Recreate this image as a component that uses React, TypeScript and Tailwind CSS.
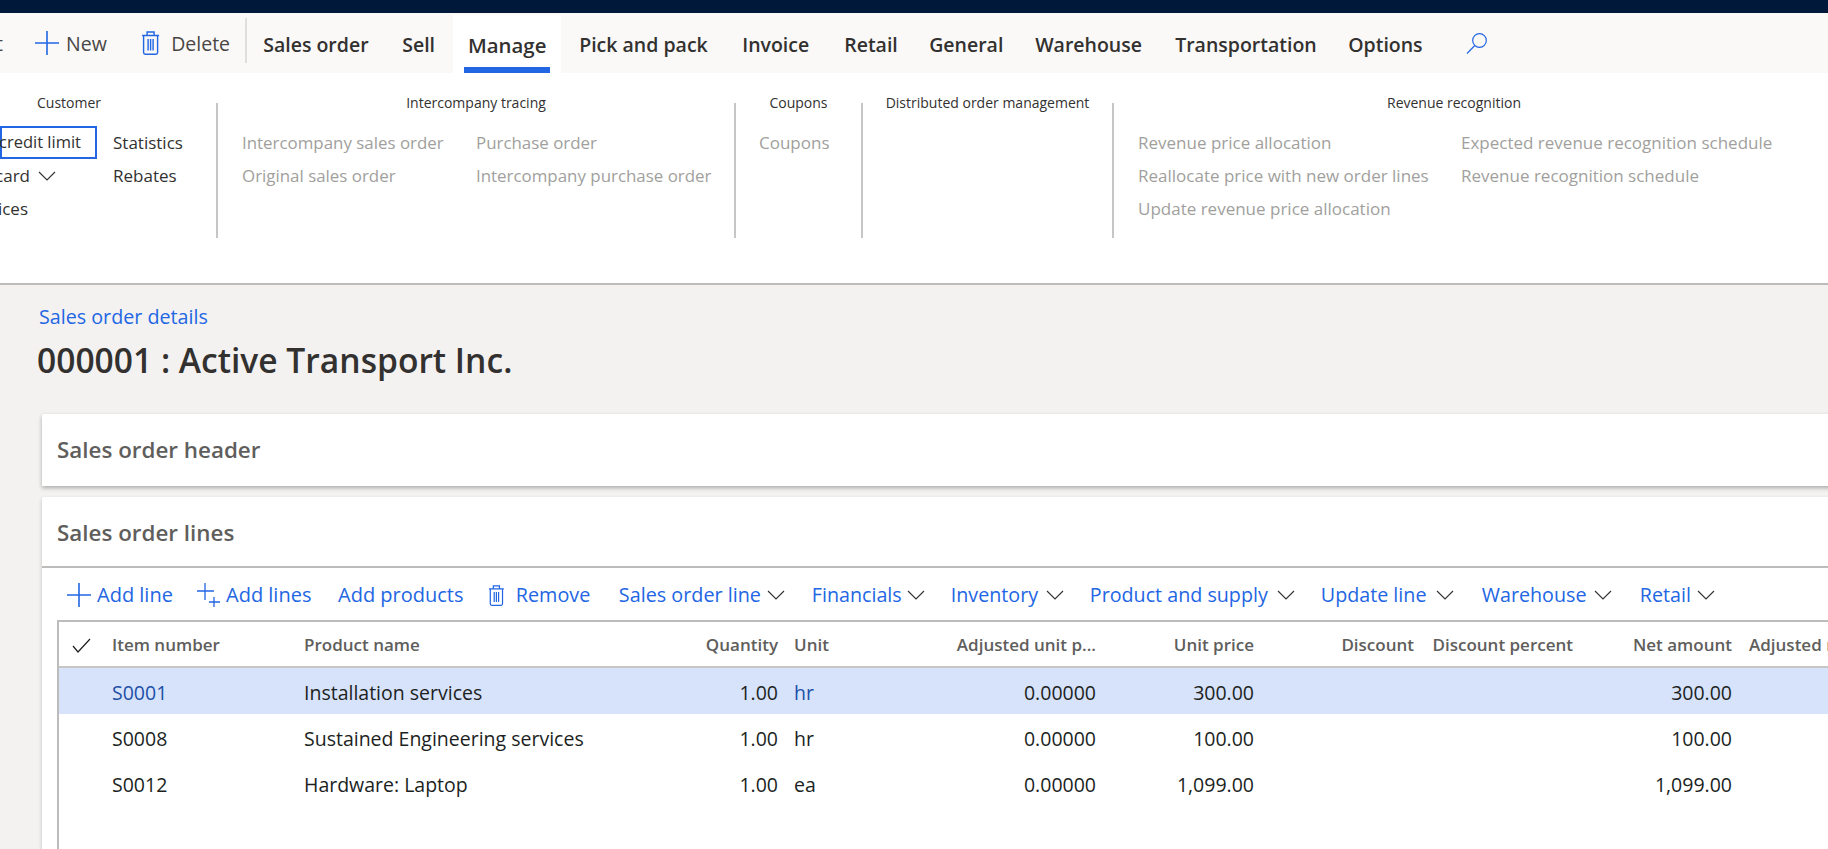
import * as React from "react";

const Plus = () => (
  <svg width="24" height="24" viewBox="0 0 24 24" className="text-[#2266e3]">
    <path d="M12 0V24M0 12H24" stroke="currentColor" strokeWidth="1.6" fill="none" />
  </svg>
);

const Trash = ({ size }: { size: number }) => (
  <svg width={size * 0.8} height={size} viewBox="0 0 19 24" className="text-[#2266e3]" fill="none">
    <path
      d="M1 4.5H18M6 4.5V1H13V4.5M2.5 4.5V21.5Q2.5 23.2 4.2 23.2H14.8Q16.5 23.2 16.5 21.5V4.5M7 8V19.5M9.5 8V19.5M12 8V19.5"
      stroke="currentColor"
      strokeWidth="1.4"
    />
  </svg>
);

const Chevron = () => (
  <svg width="18" height="10" viewBox="0 0 18 10" fill="none" className="shrink-0">
    <path d="M1 1L9 9L17 1" stroke="#323130" strokeWidth="1.1" />
  </svg>
);

const SearchIcon = () => (
  <svg width="22" height="22" viewBox="0 0 22 22" fill="none">
    <circle cx="13.5" cy="8.5" r="6.8" stroke="#2266e3" strokeWidth="1.2" />
    <path d="M8.8 13.5L1 21.5" stroke="#2266e3" strokeWidth="1.2" />
  </svg>
);

const Row = ({ cells, selected }: { cells: string[]; selected?: boolean }) => (
  <div
    className={
      "grid grid-cols-[53px_192px_345px_129px_122px_196px_158px_160px_159px_159px_200px] h-[46px] items-center pt-[4px] text-[19.5px] text-[#201f1e] " +
      (selected ? "bg-[#d6e3fa]" : "")
    }
  >
    <div />
    <div className={selected ? "text-[#1d4fa8]" : ""}>{cells[0]}</div>
    <div>{cells[1]}</div>
    <div className="text-right">{cells[2]}</div>
    <div className={"pl-[16px] " + (selected ? "text-[#1d4fa8]" : "")}>{cells[3]}</div>
    <div className="text-right">{cells[4]}</div>
    <div className="text-right">{cells[5]}</div>
    <div />
    <div />
    <div className="text-right">{cells[6]}</div>
  </div>
);

export default function App() {
  return (
    <div className="h-screen w-full overflow-hidden bg-[#f3f2f1] font-['Open_Sans',sans-serif] text-[#323130]">
      <div className="h-[13px] bg-[#00183a]" />

      {/* tab strip */}
      <div className="flex h-[60px] items-center whitespace-nowrap bg-[#faf9f8] text-[19.5px]">
        <div className="flex w-[3px] justify-end pt-[2px] text-[#484644]">Edit</div>
        <div className="ml-[32px] w-[24px]">
          <Plus />
        </div>
        <div className="ml-[7px] w-[75px] pt-[2px] text-[#484644]">New</div>
        <Trash size={24} />
        <div className="ml-[11px] w-[74px] pt-[2px] text-[#484644]">Delete</div>
        <div className="mt-[-6px] h-[45px] w-[2px] bg-[#e1dfdd]" />
        <div className="ml-[16px] w-[139px] pt-[3px] font-semibold">Sales order</div>
        <div className="w-[51px] pt-[3px] font-semibold">Sell</div>
        <div className="mt-[2px] flex h-[58px] w-[108px] flex-col items-center self-end bg-white">
          <div className="flex flex-1 items-center pt-[8px] text-[20.4px] font-semibold">Manage</div>
          <div className="h-[6px] w-[86px] bg-[#2266e3]" />
        </div>
        <div className="ml-[18px] w-[163px] pt-[3px] font-semibold">Pick and pack</div>
        <div className="w-[102px] pt-[3px] font-semibold">Invoice</div>
        <div className="w-[85px] pt-[3px] font-semibold">Retail</div>
        <div className="w-[106px] pt-[3px] font-semibold">General</div>
        <div className="w-[140px] pt-[3px] font-semibold">Warehouse</div>
        <div className="w-[173px] pt-[3px] font-semibold">Transportation</div>
        <div className="w-[118px] pt-[3px] font-semibold">Options</div>
        <SearchIcon />
      </div>

      {/* ribbon body */}
      <div className="flex h-[212px] whitespace-nowrap border-b-2 border-[#bebcba] bg-white pt-[20px] text-[17px] text-[#a19f9d]">
        <div className="w-[216px] shrink-0">
          <div className="ml-[37px] h-[20px] text-[14px] leading-[20px] text-[#323130]">Customer</div>
          <div className="mt-[13px] flex">
            <div className="w-[113px] text-[#323130]">
              <div className="flex h-[33px] w-[97px] items-center justify-end border-2 border-[#2266e3] pr-[14px] text-[16.5px]">
                Check credit limit
              </div>
              <div className="flex h-[33px] w-[56px] items-center justify-end gap-[8px]">
                Credit card
                <Chevron />
              </div>
              <div className="flex h-[33px] w-[28px] items-center justify-end">Invoices</div>
            </div>
            <div className="text-[#323130]">
              <div className="flex h-[33px] items-center">Statistics</div>
              <div className="flex h-[33px] items-center">Rebates</div>
            </div>
          </div>
        </div>
        <div className="mt-[10px] h-[135px] w-[2px] bg-[#c8c6c4]" />

        <div className="w-[516px] shrink-0">
          <div className="h-[20px] text-center text-[14px] leading-[20px] text-[#323130]">Intercompany tracing</div>
          <div className="mt-[13px] grid grid-cols-[234px_1fr] pl-[24px] text-[16.9px]">
            <div className="flex h-[33px] items-center">Intercompany sales order</div>
            <div className="flex h-[33px] items-center">Purchase order</div>
            <div className="flex h-[33px] items-center">Original sales order</div>
            <div className="flex h-[33px] items-center">Intercompany purchase order</div>
          </div>
        </div>
        <div className="mt-[10px] h-[135px] w-[2px] bg-[#c8c6c4]" />

        <div className="w-[125px] shrink-0">
          <div className="h-[20px] text-center text-[14px] leading-[20px] text-[#323130]">Coupons</div>
          <div className="mt-[13px] flex h-[33px] items-center pl-[23px]">Coupons</div>
        </div>
        <div className="mt-[10px] h-[135px] w-[2px] bg-[#c8c6c4]" />

        <div className="w-[249px] shrink-0">
          <div className="h-[20px] text-center text-[14px] leading-[20px] text-[#323130]">
            Distributed order management
          </div>
        </div>
        <div className="mt-[10px] h-[135px] w-[2px] bg-[#c8c6c4]" />

        <div className="w-[680px] shrink-0">
          <div className="h-[20px] text-center text-[14px] leading-[20px] text-[#323130]">Revenue recognition</div>
          <div className="mt-[13px] grid grid-cols-[323px_1fr] pl-[24px]">
            <div className="flex h-[33px] items-center">Revenue price allocation</div>
            <div className="flex h-[33px] items-center">Expected revenue recognition schedule</div>
            <div className="flex h-[33px] items-center">Reallocate price with new order lines</div>
            <div className="flex h-[33px] items-center">Revenue recognition schedule</div>
            <div className="flex h-[33px] items-center">Update revenue price allocation</div>
          </div>
        </div>
      </div>

      {/* page title */}
      <div className="pl-[39px] pt-[18px]">
        <div className="text-[19.7px] leading-[28px] text-[#2266e3]">Sales order details</div>
        <div className="-ml-[2px] mt-[8px] text-[33.6px] font-semibold leading-[42px]">
          000001 : Active Transport Inc.
        </div>
      </div>

      <div className="pl-[42px] pt-[33px] whitespace-nowrap">
        {/* header fasttab */}
        <div className="-mr-[60px] flex h-[72px] items-center rounded-tl-[2px] bg-white pl-[15px] text-[22.4px] font-semibold text-[#605e5c] shadow-[0_2px_4px_rgba(0,0,0,0.3)]">
          Sales order header
        </div>

        {/* lines fasttab */}
        <div className="-mr-[60px] mt-[11px] rounded-tl-[2px] bg-white pb-[100px] shadow-[0_2px_4px_rgba(0,0,0,0.2)]">
          <div className="flex h-[71px] items-center border-b-2 border-[#bebcba] pl-[15px] pt-[2px] text-[22.4px] font-semibold text-[#605e5c]">
            Sales order lines
          </div>

          <div className="flex h-[52px] items-center pl-[25px] pt-[2px] text-[20px] text-[#2266e3]">
            <Plus />
            <div className="ml-[6px] w-[100px]">Add line</div>
            <div className="relative h-[24px] w-[22px]">
              <svg width="24" height="24" viewBox="0 0 24 24" fill="none">
                <path d="M8 0V17M0 8H17M17 14V24M12 19H23" stroke="currentColor" strokeWidth="1.3" />
              </svg>
            </div>
            <div className="ml-[7px] w-[112px]">Add lines</div>
            <div className="w-[150px]">Add products</div>
            <Trash size={21} />
            <div className="ml-[11px] w-[103px] text-[19.8px]">Remove</div>
            <div className="w-[148px] text-[19.8px]">Sales order line</div>
            <Chevron />
            <div className="ml-[27px] w-[95px] text-[19.7px]">Financials</div>
            <Chevron />
            <div className="ml-[26px] w-[95px] text-[19.7px]">Inventory</div>
            <Chevron />
            <div className="ml-[26px] w-[187px] text-[19.7px]">Product and supply</div>
            <Chevron />
            <div className="ml-[26px] w-[115px] text-[19.7px]">Update line</div>
            <Chevron />
            <div className="ml-[28px] w-[112px] text-[19.7px]">Warehouse</div>
            <Chevron />
            <div className="ml-[28px] w-[57px] text-[19.7px]">Retail</div>
            <Chevron />
          </div>

          {/* grid */}
          <div className="ml-[15px] border-l-2 border-t-2 border-[#bebcba] pb-[100px]">
            <div className="grid h-[46px] grid-cols-[53px_192px_345px_129px_122px_196px_158px_160px_159px_159px_200px] items-center border-b-2 border-[#c8c6c4] pt-[2px] text-[17px] font-semibold text-[#605e5c]">
              <div className="pl-[13px]">
                <svg width="19" height="15" viewBox="0 0 19 15" fill="none">
                  <path d="M1 8L6 14L18 1" stroke="#201f1e" strokeWidth="1.2" />
                </svg>
              </div>
              <div>Item number</div>
              <div>Product name</div>
              <div className="text-right">Quantity</div>
              <div className="pl-[16px]">Unit</div>
              <div className="text-right">Adjusted unit p...</div>
              <div className="text-right">Unit price</div>
              <div className="text-right">Discount</div>
              <div className="text-right">Discount percent</div>
              <div className="text-right">Net amount</div>
              <div className="pl-[17px]">Adjusted net amount</div>
            </div>
            <Row selected cells={["S0001", "Installation services", "1.00", "hr", "0.00000", "300.00", "300.00"]} />
            <Row cells={["S0008", "Sustained Engineering services", "1.00", "hr", "0.00000", "100.00", "100.00"]} />
            <Row cells={["S0012", "Hardware: Laptop", "1.00", "ea", "0.00000", "1,099.00", "1,099.00"]} />
          </div>
        </div>
      </div>
    </div>
  );
}
